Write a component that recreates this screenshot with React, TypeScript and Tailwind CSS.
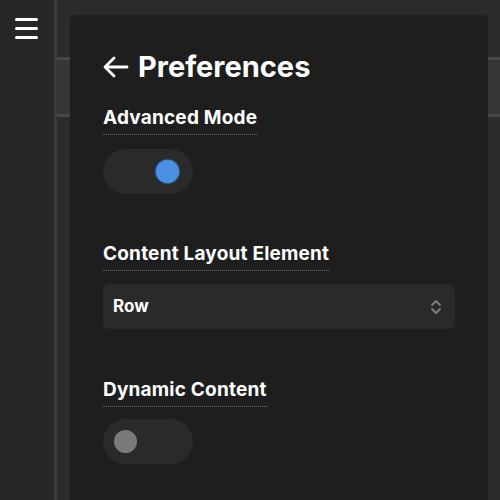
import { useState } from 'react';

function Toggle({ on, onChange }: { on: boolean; onChange: () => void }) {
  return (
    <button
      onClick={onChange}
      className="w-[90px] h-[45px] rounded-full bg-[#2a2a2a] flex items-center px-[11px]"
    >
      <span
        className={`w-[23px] h-[23px] rounded-full ${on ? 'ml-[42px] bg-[#4a90e2] ring-1 ring-[#2c5a8c]' : 'bg-[#7a7a7a]'}`}
      />
    </button>
  );
}

function Label({ children }: { children: string }) {
  return (
    <div className="inline-block text-[19px] font-bold leading-[26px] text-white border-b border-dotted border-[#6a6a6a] pb-[3px] tracking-[0.2px]">
      {children}
    </div>
  );
}

export default function App() {
  const [advanced, setAdvanced] = useState(true);
  const [dynamic, setDynamic] = useState(false);
  const [layout, setLayout] = useState('Row');

  return (
    <div className="w-[500px] h-[500px] overflow-hidden flex bg-[#272727] font-['Inter','Liberation_Sans',sans-serif]">
      {/* Sidebar */}
      <aside className="w-[57px] shrink-0 border-r-[3px] border-[#3a3a3a] bg-[#272727] pt-[18px] pl-[15px]">
        <button className="flex flex-col gap-[6px] w-[23px]">
          <span className="h-[3px] w-full rounded-full bg-white" />
          <span className="h-[3px] w-full rounded-full bg-white" />
          <span className="h-[3px] w-full rounded-full bg-white" />
        </button>
      </aside>

      {/* Content area */}
      <div className="flex-1 pt-[15px] pl-[13px] pr-[12px] bg-[linear-gradient(to_bottom,#2b2b2b_57px,#474747_57px,#474747_60px,#363636_60px,#363636_114px,#474747_114px,#474747_117px,#2b2b2b_117px)]">
        <div className="h-[600px] rounded-[5px] bg-[#1e1e1e] pt-[34px] pl-[33px] pr-[33px]">
          <div className="flex items-center gap-[9px] text-white">
            <svg width="26" height="22" viewBox="0 0 26 22" fill="none" stroke="white" strokeWidth="2.8" strokeLinecap="round" strokeLinejoin="round">
              <path d="M24 11H3M11 2L2 11l9 9" />
            </svg>
            <h1 className="text-[29px] font-bold leading-[36px]">Preferences</h1>
          </div>

          <div className="mt-[20px]">
            <Label>Advanced Mode</Label>
            <div className="mt-[14px]">
              <Toggle on={advanced} onChange={() => setAdvanced(!advanced)} />
            </div>
          </div>

          <div className="mt-[47px]">
            <Label>Content Layout Element</Label>
            <div className="mt-[13px] relative">
              <select
                value={layout}
                onChange={(e) => setLayout(e.target.value)}
                className="appearance-none w-full h-[45px] rounded-[6px] bg-[#2a2a2a] text-white text-[17px] font-bold pl-[10px]"
              >
                <option>Row</option>
                <option>Column</option>
                <option>Grid</option>
              </select>
              <svg className="absolute right-[13px] top-[15px] pointer-events-none" width="12" height="16" viewBox="0 0 12 16" fill="none" stroke="#7d7d7d" strokeWidth="1.8" strokeLinecap="round" strokeLinejoin="round">
                <path d="M2 6l4-4 4 4M2 10l4 4 4-4" />
              </svg>
            </div>
          </div>

          <div className="mt-[48px]">
            <Label>Dynamic Content</Label>
            <div className="mt-[12px]">
              <Toggle on={dynamic} onChange={() => setDynamic(!dynamic)} />
            </div>
          </div>
        </div>
      </div>
    </div>
  );
}
